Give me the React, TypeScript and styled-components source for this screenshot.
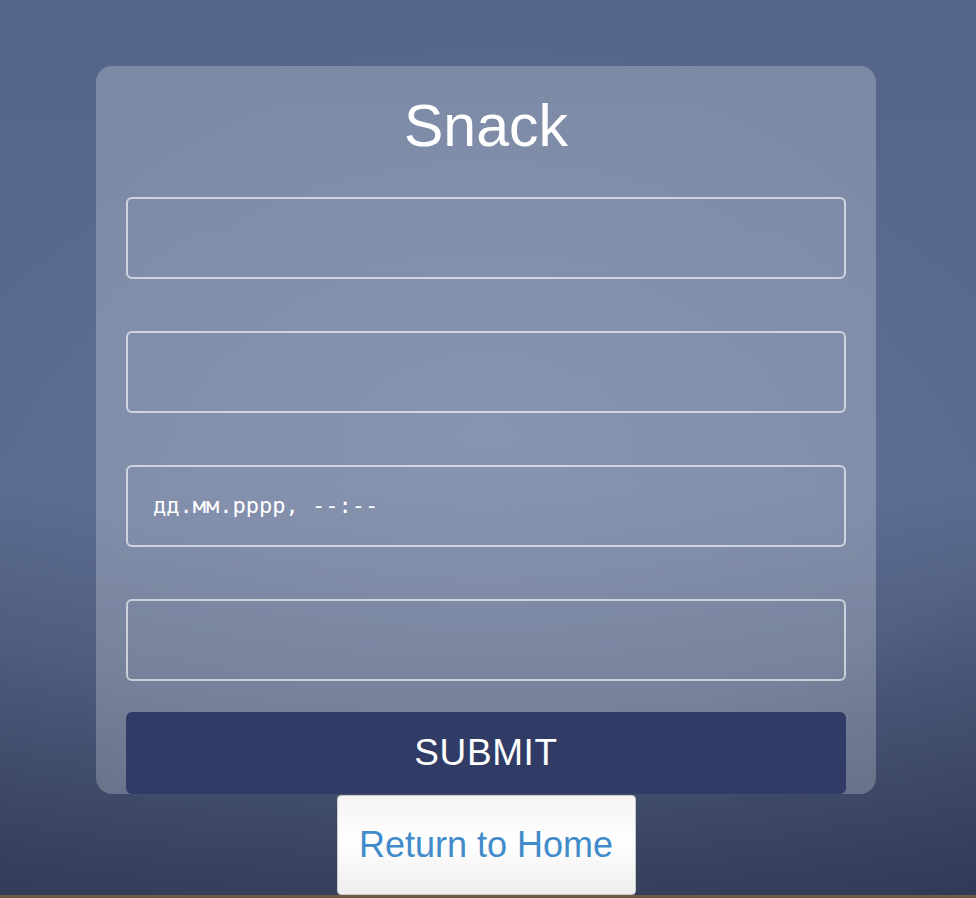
import React from "react";
import styled, { createGlobalStyle } from "styled-components";

const Global = createGlobalStyle`
  html { background: #6b5a45; }
  body { margin: 0; font-family: "Liberation Sans", Arial, sans-serif; }
  * { box-sizing: border-box; }
`;

const Page = styled.div`
  display: flex;
  flex-direction: column;
  align-items: center;
  padding: 66px 4px 0 0;
  background:
    radial-gradient(ellipse 55% 45% at 50% 48%, rgba(120, 140, 180, 0.3) 0%, rgba(120, 140, 180, 0) 100%),
    radial-gradient(ellipse 110% 80% at 45% 30%, rgba(0, 0, 0, 0) 65%, rgba(10, 15, 35, 0.25) 100%),
    linear-gradient(to bottom, #55668a 0%, #5a6b8f 55%, #4a5777 80%, #3d4968 100%);
`;

const Card = styled.form`
  width: 780px;
  padding: 27px 30px 0;
  border-radius: 16px;
  background: rgba(255, 255, 255, 0.23);
  display: flex;
  flex-direction: column;
`;

const Title = styled.h1`
  margin: 0 0 36px;
  text-align: center;
  color: #fff;
  font-weight: 400;
  font-size: 59px;
  line-height: 1.15;
`;

const Fields = styled.div`
  display: flex;
  flex-direction: column;
  gap: 52px;
  margin-bottom: 31px;
`;

const Field = styled.input`
  width: 720px;
  height: 82px;
  border: 2px solid rgba(255, 255, 255, 0.62);
  border-radius: 6px;
  background: transparent;
  padding: 0 25px;
  font-family: "DejaVu Sans Mono", "Liberation Mono", monospace;
  font-size: 22px;
  color: #fff;
  outline: none;
  &::placeholder { color: #fff; opacity: 1; }
`;

const Submit = styled.button`
  width: 720px;
  height: 82px;
  border: none;
  border-radius: 6px;
  background: #303c66;
  color: #fff;
  font-family: "Liberation Sans", Arial, sans-serif;
  font-size: 37px;
  letter-spacing: 0.6px;
  cursor: pointer;
`;

const HomeButton = styled.button`
  margin-top: 1px;
  width: 299px;
  height: 100px;
  border: 1px solid #c8c8c8;
  border-radius: 4px;
  background: linear-gradient(to bottom, #f4f4f4 0%, #ffffff 45%, #eeeeee 100%);
  color: #428bca;
  font-family: "Liberation Sans", Arial, sans-serif;
  font-size: 36px;
  cursor: pointer;
`;

export default function App() {
  return (
    <>
      <Global />
      <Page>
        <Card onSubmit={(e) => e.preventDefault()}>
          <Title>Snack</Title>
          <Fields>
            <Field type="text" />
            <Field type="text" />
            <Field type="text" placeholder="дд.мм.рррр, --:--" />
            <Field type="text" />
          </Fields>
          <Submit type="submit">SUBMIT</Submit>
        </Card>
        <HomeButton type="button">Return to Home</HomeButton>
      </Page>
    </>
  );
}
